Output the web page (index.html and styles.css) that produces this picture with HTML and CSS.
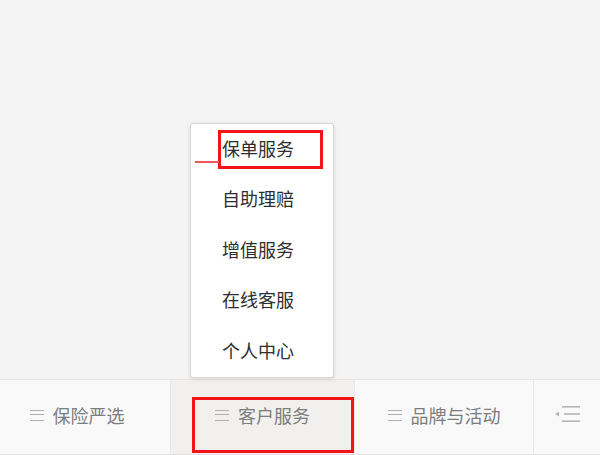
FILE: index.html
```html
<!DOCTYPE html>
<html lang="zh-CN">
<head>
    <meta charset="UTF-8">
    <meta name="viewport" content="width=device-width, initial-scale=1.0">
    <title>客户服务</title>
    <link rel="stylesheet" href="styles.css">
</head>
<body>
    <div class="page">
        <div class="main"></div>

        <!-- 弹出菜单 -->
        <div class="popup">
            <div class="popup-item">保单服务</div>
            <div class="popup-item">自助理赔</div>
            <div class="popup-item">增值服务</div>
            <div class="popup-item">在线客服</div>
            <div class="popup-item">个人中心</div>
        </div>

        <div class="tabbar">
            <div class="tab tab-first"><span class="menu-icon"></span>保险严选</div>
            <div class="tab active"><span class="menu-icon"></span>客户服务</div>
            <div class="tab"><span class="menu-icon"></span>品牌与活动</div>
            <div class="tab tab-toggle">
                <svg width="28" height="22" viewBox="0 0 28 22">
                    <path d="M2 11 L6 8.5 L6 13.5 Z" fill="#b5b5b5"/>
                    <rect x="9" y="3" width="18" height="1.6" fill="#b5b5b5"/>
                    <rect x="11" y="10.2" width="16" height="1.6" fill="#b5b5b5"/>
                    <rect x="9" y="17.4" width="18" height="1.6" fill="#b5b5b5"/>
                </svg>
            </div>
        </div>

        <!-- 标注 -->
        <div class="mark mark-item"></div>
        <div class="mark-line"></div>
        <div class="mark mark-tab"></div>
    </div>
</body>
</html>
```

FILE: styles.css
```css
* {
    margin: 0;
    padding: 0;
    box-sizing: border-box;
}

body {
    font-family: "Liberation Sans", "Noto Sans CJK SC", sans-serif;
    background: #f4f4f4;
    width: 600px;
    height: 455px;
    overflow: hidden;
}

.page {
    position: relative;
    height: 455px;
    display: flex;
    flex-direction: column;
}

.main {
    height: 379px;
    background: #f4f4f4;
}

.popup {
    position: absolute;
    left: 190px;
    top: 123px;
    width: 144px;
    padding-top: 1px;
    background: #fff;
    border: 1px solid #d6d6d6;
    border-radius: 3px;
    box-shadow: 0 1px 4px rgba(0, 0, 0, 0.12);
}

.popup-item {
    height: 50.4px;
    line-height: 50.4px;
    padding-left: 31px;
    font-size: 18px;
    color: #2e2e2e;
}

.tabbar {
    flex: 1;
    display: grid;
    grid-template-columns: 170px 184px 179px 1fr;
    background: #f9f9f9;
    border-top: 1px solid #e6e6e6;
    border-bottom: 1px solid #e2e2e2;
}

.tab {
    display: flex;
    align-items: center;
    justify-content: center;
    padding-bottom: 4px;
    font-size: 18px;
    color: #7c7c7c;
    border-left: 1px solid #e8e8e8;
}

.tab-first {
    border-left: none;
    padding-right: 16px;
}

.tab.active {
    background: #f1f0ee;
}

.tab-toggle {
    padding-bottom: 6px;
}

.menu-icon {
    width: 14px;
    height: 11px;
    margin-right: 9px;
    border-top: 1.5px solid #b0b0b0;
    border-bottom: 1.5px solid #b0b0b0;
    position: relative;
}

.menu-icon::after {
    content: "";
    position: absolute;
    left: 0;
    right: 0;
    top: 3.5px;
    border-top: 1.5px solid #b0b0b0;
}

.mark {
    position: absolute;
    border: 3px solid #f3141a;
}

.mark-item {
    left: 218px;
    top: 130px;
    width: 105px;
    height: 39px;
}

.mark-line {
    position: absolute;
    left: 195px;
    top: 161px;
    width: 24px;
    height: 2px;
    background: #f0555a;
}

.mark-tab {
    left: 192px;
    top: 397px;
    width: 162px;
    height: 56px;
}
```
